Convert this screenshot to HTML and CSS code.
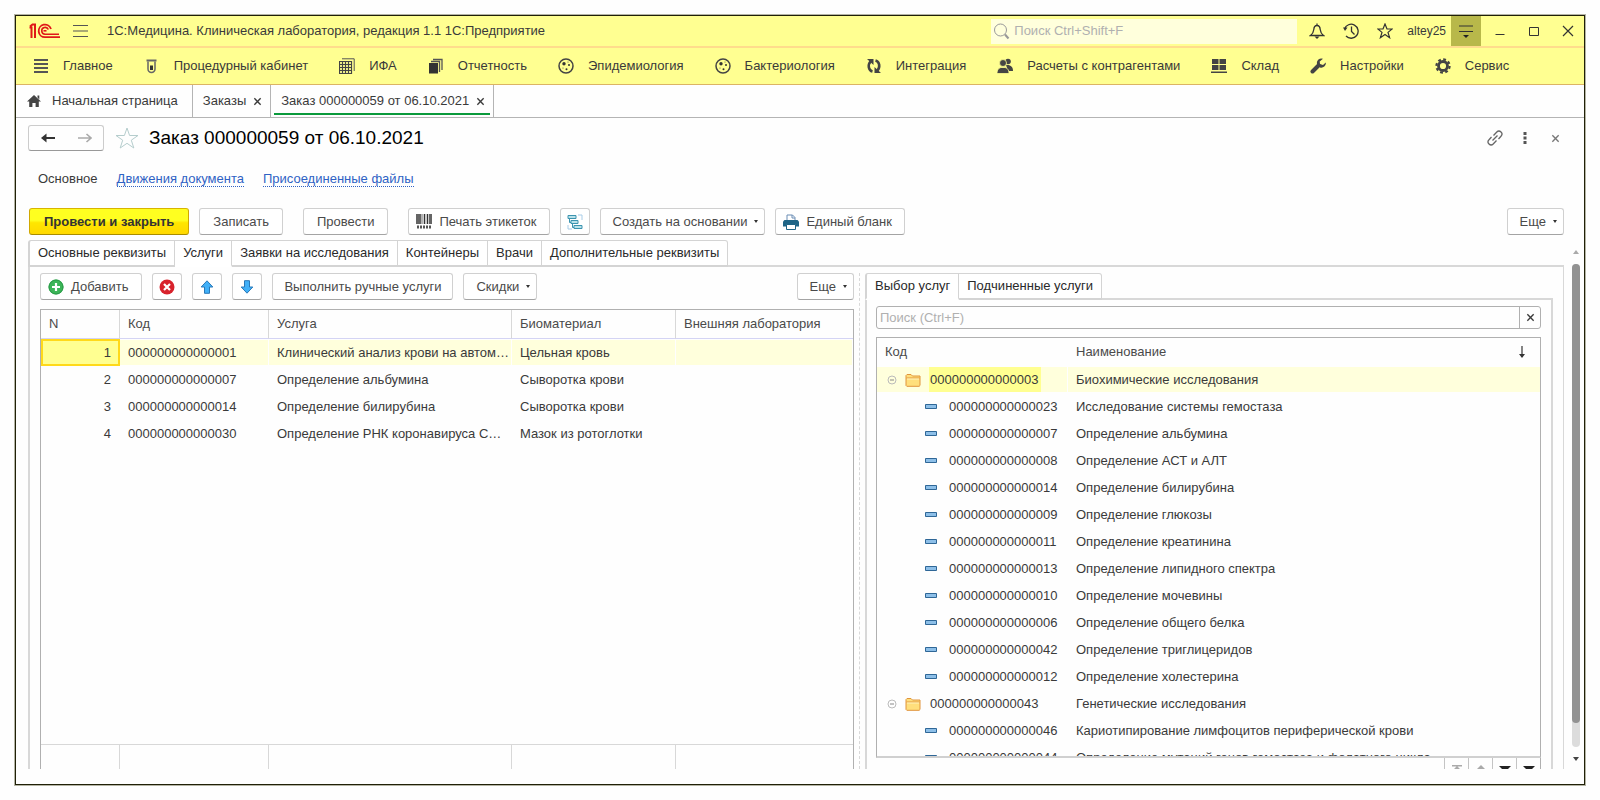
FILE: index.html
```html
<!DOCTYPE html>
<html lang="ru">
<head>
<meta charset="utf-8">
<title>Заказ 000000059 от 06.10.2021</title>
<link rel="stylesheet" href="styles.css">
</head>
<body>
<svg class="defs" width="0" height="0" aria-hidden="true">
  <symbol id="i-folder" viewBox="0 0 16 14"><path d="M1 12.500V2.500l1-1h4l1.500 1.500H15v9.500l-.8.8H1.800z" fill="#ffdf7c" stroke="#e0943c"/><path d="M1.500 5h13" stroke="#e0943c"/><path d="M2 6h12" stroke="#fff3bd"/></symbol>
  <symbol id="i-item" viewBox="0 0 12 5"><path d="M.5.5h11v4H.5z" fill="#8dbfe8" stroke="#2f6797"/></symbol>
  <symbol id="i-minus" viewBox="0 0 10 10"><circle cx="5" cy="5" r="4" fill="none" stroke="#bbb"/><path d="M3 5h4" stroke="#888"/></symbol>
  <symbol id="i-x" viewBox="0 0 10 10"><path d="M1.500 1.500l7 7M8.500 1.500l-7 7" fill="none" stroke="currentColor" stroke-width="1.500"/></symbol>
  <symbol id="i-dish" viewBox="0 0 16 16"><circle cx="8" cy="8" r="7" fill="none" stroke="#444" stroke-width="1.500"/><circle cx="6" cy="5.800" r="1.700" fill="#333"/><circle cx="11" cy="7" r="1" fill="#333"/><circle cx="8.500" cy="11.200" r="1" fill="#333"/><circle cx="10" cy="4" r=".6" fill="#555"/><circle cx="5" cy="10" r=".6" fill="#555"/></symbol>
</svg>
<div class="window">
  <header class="titlebar">
    <svg class="logo" width="32" height="16" viewBox="0 0 32 16" fill="none" stroke="#e01818"><path d="M.5 4.500H2.500V15M6 15V1.500H3.500L1 3.500" stroke-width="2"/><path d="M22 6A6.300 6.300 0 1 0 16 14.200H31" stroke-width="1.800"/><path d="M19.300 6.500A3.400 3.400 0 1 0 16 11.200H30" stroke-width="1.600"/><path d="M14.500 7.800h3" stroke-width="1.600"/></svg>
    <button class="icon-btn burger" aria-label="Меню"><svg width="16" height="14" viewBox="0 0 16 14"><path d="M0 1.500h15M0 7h15M0 12.500h15" stroke="#555" stroke-width="1.200"/></svg></button>
    <div class="app-name">1С:Медицина. Клиническая лаборатория, редакция 1.1 1С:Предприятие</div>
    <label class="global-search">
      <svg width="17" height="17" viewBox="0 0 17 17" fill="none" stroke="#999"><circle cx="7.500" cy="7" r="6"/><path d="M12 11.500l3.500 4" stroke-width="2"/></svg>
      <input type="text" placeholder="Поиск Ctrl+Shift+F" aria-label="Поиск">
    </label>
    <div class="sys-icons">
      <button class="icon-btn" aria-label="Уведомления"><svg width="16" height="16" viewBox="0 0 16 16" fill="none" stroke="#333" stroke-width="1.300"><path d="M1.500 12.500c2-1.500 3-3 3.300-6C5 3.500 6 2.500 8 2.500s3 1 3.200 4c.3 3 1.300 4.500 3.300 6zM8 2.500V.5"/><path d="M5.500 13.500h5L8 16z" fill="#333" stroke="none"/></svg></button>
      <button class="icon-btn" aria-label="История"><svg width="16" height="16" viewBox="0 0 16 16" fill="none" stroke="#333" stroke-width="1.300"><path d="M1.500 6A7 7 0 1 1 3 13M8.500 3.500v5l3 3"/><path d="M0 4.500h4.500L2 8z" fill="#333" stroke="none"/></svg></button>
      <button class="icon-btn" aria-label="Избранное"><svg width="16" height="16" viewBox="0 0 16 16" fill="none" stroke="#333" stroke-width="1.200"><path d="M8 1l2 5h5.200l-4.200 3.400 1.600 5.300L8 11.500l-4.600 3.200L5 9.400.8 6H6z"/></svg></button>
      <span class="user">altey25</span>
    </div>
    <button class="panel-toggle" aria-label="Настройка панели"><svg width="16" height="16" viewBox="0 0 16 16"><path d="M1 3h14M1 8.500h14" stroke="#333" stroke-width="1.200"/><path d="M5 12h6l-3 3z" fill="#222"/></svg></button>
    <div class="win-btns">
      <button class="icon-btn" aria-label="Свернуть"><svg width="12" height="12" viewBox="0 0 12 12"><path d="M1.500 9.500h9" stroke="#333"/></svg></button>
      <button class="icon-btn" aria-label="Развернуть"><svg width="12" height="12" viewBox="0 0 12 12"><path d="M1.500 2.500h9v8h-9z" fill="none" stroke="#333"/></svg></button>
      <button class="icon-btn" aria-label="Закрыть"><svg width="12" height="12" viewBox="0 0 12 12"><path d="M1 1l10 10M11 1L1 11" stroke="#333" stroke-width="1.200"/></svg></button>
    </div>
  </header>

  <nav class="sections">
    <a href="#"><svg viewBox="0 0 16 16"><path d="M1 2h14M1 6h14M1 10h14M1 14h14" stroke="#555" stroke-width="2"/></svg>Главное</a>
    <a href="#"><svg viewBox="0 0 16 16"><path d="M2.500 1.500h10v2h-10z" fill="#666"/><path d="M4 3.500V11a3.500 3.500 0 0 0 7 0V3.500" fill="none" stroke="#666" stroke-width="1.500"/><path d="M6 7.500h3v4.500H6z" fill="#333"/></svg>Процедурный кабинет</a>
    <a href="#"><svg viewBox="0 0 16 16"><path d="M3 .8h12.200V13" fill="none" stroke="#555"/><path d="M.5 3.500h12v12H.500zM.5 6.500h12M.5 9.500h12M.5 12.500h12M3.500 3.500v12M6.500 3.500v12M9.500 3.500v12" fill="none" stroke="#444" stroke-width="1.200"/></svg>ИФА</a>
    <a href="#"><svg viewBox="0 0 16 16"><path d="M1 5h9v10.500H1z" fill="#333"/><path d="M3 3.500h8.500V14M5 1.500h9V12" fill="none" stroke="#555" stroke-width="1.300"/></svg>Отчетность</a>
    <a href="#"><svg><use href="#i-dish"/></svg>Эпидемиология</a>
    <a href="#"><svg><use href="#i-dish"/></svg>Бактериология</a>
    <a href="#"><svg viewBox="0 0 16 16" fill="none" stroke="#444" stroke-width="2.600"><path d="M6.500 13.500C2.500 12.500 1.500 7 4.500 3.500M9.500 2.500c4 1 5 6.500 2 10"/><path d="M1 1h6.500v6zM15 15H8.500V9z" fill="#444" stroke="none"/></svg>Интеграция</a>
    <a href="#"><svg viewBox="0 0 16 16" fill="#444"><circle cx="11" cy="3.500" r="2.800"/><path d="M9 7c5-.5 7 2 7 6h-5z"/><g stroke="#ffff91" stroke-width=".8"><circle cx="6" cy="5" r="3.500"/><path d="M0 15.500c0-4 2-5.500 4-6h4c2 .5 4 2 4 6z"/></g></svg>Расчеты с контрагентами</a>
    <a href="#"><svg viewBox="0 0 16 16" fill="#444"><path d="M1 1h6.500v5H1zM8.500 1H15v5H8.500zM1 7h6.500v5H1zM8.500 7H15v5H8.500zM0 13.500h16V15H0z"/></svg>Склад</a>
    <a href="#"><svg viewBox="0 0 16 16"><path d="M2.500 13.500l6-6" stroke="#444" stroke-width="4" stroke-linecap="round"/><path d="M13 .8A4.500 4.500 0 0 0 7 6l3 3.500a4.500 4.500 0 0 0 5.800-5L13 7l-3-1-.3-2.500z" fill="#444"/></svg>Настройки</a>
    <a href="#"><svg viewBox="0 0 16 16" fill="none" stroke="#444"><circle cx="8" cy="8" r="4.500" stroke-width="2.800"/><circle cx="8" cy="8" r="6.600" stroke-width="2.200" stroke-dasharray="2.800 2.383"/></svg>Сервис</a>
  </nav>

  <div class="open-tabs">
    <a class="otab home" href="#"><svg width="14" height="14" viewBox="0 0 14 14" fill="#444"><path d="M7 1l7 6.500h-2.200V13H8.600V9H5.400v4H2.200V7.500H0zM10.500 1.500h1.800v4l-1.800-2z"/></svg>Начальная страница</a>
    <div class="otab"><a href="#">Заказы</a><button class="icon-btn" aria-label="Закрыть вкладку"><svg width="9" height="9"><use href="#i-x"/></svg></button></div>
    <div class="otab current"><a href="#">Заказ 000000059 от 06.10.2021</a><button class="icon-btn" aria-label="Закрыть вкладку"><svg width="9" height="9"><use href="#i-x"/></svg></button></div>
  </div>

  <main class="form">
    <div class="form-head">
      <div class="history-btns">
        <button class="icon-btn" aria-label="Назад"><svg width="14" height="10" viewBox="0 0 14 10"><path d="M2 5h12" stroke="#333" stroke-width="2"/><path d="M0 5l5.500-4.500v9z" fill="#333"/></svg></button>
        <button class="icon-btn" aria-label="Вперед"><svg width="14" height="10" viewBox="0 0 14 10" fill="none" stroke="#aaa" stroke-width="1.600"><path d="M0 5h13M8.500 1L13 5 8.500 9"/></svg></button>
      </div>
      <button class="icon-btn fav" aria-label="В избранное"><svg width="24" height="22" viewBox="0 0 24 22" fill="none" stroke="#b5cdcd"><path d="M12 1l2.600 7.500H23l-6.700 4.700 2.500 7.800-6.800-4.700L5.200 21l2.500-7.800L1 8.500h8.400z"/></svg></button>
      <h1>Заказ 000000059 от 06.10.2021</h1>
      <div class="head-right">
        <button class="icon-btn" aria-label="Ссылка"><svg width="16" height="16" viewBox="0 0 16 16" fill="none" stroke="#666" stroke-width="1.300"><path d="M6.500 5.500L9.800 2a2.900 2.900 0 0 1 4.200 4.200L11.500 9M9.500 10.500L6.200 14A2.900 2.900 0 0 1 2 9.800L4.500 7M5.500 10.500l5-5"/></svg></button>
        <button class="icon-btn" aria-label="Еще"><svg width="4" height="12" viewBox="0 0 4 12" fill="#555"><path d="M.5 0h3v3h-3zM.5 4.500h3v3h-3zM.5 9h3v3h-3z"/></svg></button>
        <button class="icon-btn dim" aria-label="Закрыть"><svg width="9" height="9"><use href="#i-x"/></svg></button>
      </div>
    </div>

    <div class="form-links"><span>Основное</span><a href="#">Движения документа</a><a href="#">Присоединенные файлы</a></div>

    <div class="commands">
      <button class="btn primary">Провести и закрыть</button>
      <button class="btn">Записать</button>
      <button class="btn apart">Провести</button>
      <button class="btn apart with-icon"><svg width="16" height="15" viewBox="0 0 16 15"><path d="M1 0v10M4 0v10M8.500 0v10M11.500 0v10M15 0v10" stroke="#333" stroke-width="1.500"/><path d="M2.500 0v10M6 0v10M13.500 0v10" stroke="#666"/><path d="M1 13h14" stroke="#555" stroke-width="3" stroke-dasharray="2 1"/></svg>Печать этикеток</button>
      <button class="btn square" aria-label="Структура подчиненности"><svg width="16" height="16" viewBox="0 0 16 16" fill="none" stroke="#3c94b0"><path d="M1 1.500h8v3H1zM4 6.500h7v3H4zM7 11.500h8v3H7zM2.500 4.500v4H4M5.500 9.500v4H7" fill="#b9e2ea"/><path d="M11 1h4v5M5 15H1v-4" stroke="#a8cde8"/></svg></button>
      <button class="btn menu">Создать на основании</button>
      <button class="btn with-icon"><svg width="16" height="16" viewBox="0 0 16 16"><path d="M4 7V1h5.500L12 3.500V7z" fill="#fff" stroke="#6a8db5"/><path d="M9 1v3h3" fill="none" stroke="#6a8db5"/><path d="M1.500 6h13L16 7.500v5H0v-5z" fill="#1f6587"/><path d="M3.500 10.500h9v5h-9z" fill="#fff" stroke="#1f6587"/></svg>Единый бланк</button>
      <button class="btn menu push">Еще</button>
    </div>

    <div class="tabs" role="tablist">
      <button role="tab">Основные реквизиты</button>
      <button role="tab" class="active">Услуги</button>
      <button role="tab">Заявки на исследования</button>
      <button role="tab">Контейнеры</button>
      <button role="tab">Врачи</button>
      <button role="tab">Дополнительные реквизиты</button>
    </div>

    <div class="page">
      <section class="services">
        <div class="commands inner">
          <button class="btn with-icon"><svg width="16" height="16" viewBox="0 0 16 16"><circle cx="8" cy="8" r="7.500" fill="#3cb558"/><circle cx="8" cy="8" r="7" fill="none" stroke="#2a9a48"/><path d="M8 4v8M4 8h8" stroke="#fff" stroke-width="2.200"/></svg>Добавить</button>
          <button class="btn square" aria-label="Удалить"><svg width="16" height="16" viewBox="0 0 16 16"><circle cx="8" cy="8" r="7.500" fill="#d8222c"/><path d="M5 5l6 6M11 5l-6 6" stroke="#fff" stroke-width="2.200"/></svg></button>
          <button class="btn square" aria-label="Вверх"><svg width="14" height="14" viewBox="0 0 14 14"><path d="M7 .8L12.800 7H9.500v6.300h-5V7H1.200z" fill="#40b0f8" stroke="#2878b8"/></svg></button>
          <button class="btn square" aria-label="Вниз"><svg width="14" height="14" viewBox="0 0 14 14"><path d="M7 13.200L12.800 7H9.500V.7h-5V7H1.200z" fill="#40b0f8" stroke="#2878b8"/></svg></button>
          <button class="btn">Выполнить ручные услуги</button>
          <button class="btn menu">Скидки</button>
          <button class="btn menu push">Еще</button>
        </div>
        <table class="grid">
          <colgroup><col class="c-n"><col class="c-code"><col class="c-service"><col class="c-bio"><col></colgroup>
          <thead><tr><th>N</th><th>Код</th><th>Услуга</th><th>Биоматериал</th><th>Внешняя лаборатория</th></tr></thead>
          <tbody>
            <tr class="selected"><td class="num cell-current">1</td><td>000000000000001</td><td>Клинический анализ крови на автом…</td><td>Цельная кровь</td><td></td></tr>
            <tr><td class="num">2</td><td>000000000000007</td><td>Определение альбумина</td><td>Сыворотка крови</td><td></td></tr>
            <tr><td class="num">3</td><td>000000000000014</td><td>Определение билирубина</td><td>Сыворотка крови</td><td></td></tr>
            <tr><td class="num">4</td><td>000000000000030</td><td>Определение РНК коронавируса С…</td><td>Мазок из ротоглотки</td><td></td></tr>
            <tr class="filler"><td colspan="5"></td></tr>
          </tbody>
          <tfoot><tr><td></td><td></td><td></td><td></td><td></td></tr></tfoot>
        </table>
      </section>
      <div class="splitter"></div>
      <section class="picker">
        <div class="tabs" role="tablist">
          <button role="tab" class="active">Выбор услуг</button>
          <button role="tab">Подчиненные услуги</button>
        </div>
        <div class="picker-page">
          <div class="search">
            <input type="text" placeholder="Поиск (Ctrl+F)" aria-label="Поиск услуги">
            <button aria-label="Очистить"><svg width="9" height="9"><use href="#i-x"/></svg></button>
          </div>
          <div class="tree-box">
            <table class="tree">
              <colgroup><col class="c-tree"><col></colgroup>
              <thead><tr><th>Код</th><th><span class="th-in">Наименование<svg width="8" height="12" viewBox="0 0 8 12"><path d="M4 0v11" stroke="#333" stroke-width="1.200"/><path d="M1 8h6l-3 4z" fill="#333"/></svg></span></th></tr></thead>
              <tbody>
                <tr class="group selected"><td><svg class="tg" width="10" height="10"><use href="#i-minus"/></svg><svg class="fold" width="16" height="14"><use href="#i-folder"/></svg><span class="code">000000000000003</span></td><td>Биохимические исследования</td></tr>
                <tr><td><svg class="leaf" width="12" height="5"><use href="#i-item"/></svg>000000000000023</td><td>Исследование системы гемостаза</td></tr>
                <tr><td><svg class="leaf" width="12" height="5"><use href="#i-item"/></svg>000000000000007</td><td>Определение альбумина</td></tr>
                <tr><td><svg class="leaf" width="12" height="5"><use href="#i-item"/></svg>000000000000008</td><td>Определение АСТ и АЛТ</td></tr>
                <tr><td><svg class="leaf" width="12" height="5"><use href="#i-item"/></svg>000000000000014</td><td>Определение билирубина</td></tr>
                <tr><td><svg class="leaf" width="12" height="5"><use href="#i-item"/></svg>000000000000009</td><td>Определение глюкозы</td></tr>
                <tr><td><svg class="leaf" width="12" height="5"><use href="#i-item"/></svg>000000000000011</td><td>Определение креатинина</td></tr>
                <tr><td><svg class="leaf" width="12" height="5"><use href="#i-item"/></svg>000000000000013</td><td>Определение липидного спектра</td></tr>
                <tr><td><svg class="leaf" width="12" height="5"><use href="#i-item"/></svg>000000000000010</td><td>Определение мочевины</td></tr>
                <tr><td><svg class="leaf" width="12" height="5"><use href="#i-item"/></svg>000000000000006</td><td>Определение общего белка</td></tr>
                <tr><td><svg class="leaf" width="12" height="5"><use href="#i-item"/></svg>000000000000042</td><td>Определение триглицеридов</td></tr>
                <tr><td><svg class="leaf" width="12" height="5"><use href="#i-item"/></svg>000000000000012</td><td>Определение холестерина</td></tr>
                <tr class="group"><td><svg class="tg" width="10" height="10"><use href="#i-minus"/></svg><svg class="fold" width="16" height="14"><use href="#i-folder"/></svg><span class="code">000000000000043</span></td><td>Генетические исследования</td></tr>
                <tr><td><svg class="leaf" width="12" height="5"><use href="#i-item"/></svg>000000000000046</td><td>Кариотипирование лимфоцитов периферической крови</td></tr>
                <tr><td><svg class="leaf" width="12" height="5"><use href="#i-item"/></svg>000000000000044</td><td>Определение мутаций генов гемостаза и фолатного цикла</td></tr>
              </tbody>
            </table>
          </div>
          <div class="pager">
            <button aria-label="В начало" disabled><svg width="12" height="10" viewBox="0 0 12 10" fill="#aaa"><path d="M1 0h10v1.500H1zM6 1l5 5H1z"/></svg></button>
            <button aria-label="Вверх" disabled><svg width="12" height="10" viewBox="0 0 12 10" fill="#aaa"><path d="M6 0l5 5H1z"/></svg></button>
            <button aria-label="Вниз"><svg width="12" height="10" viewBox="0 0 12 10" fill="#222"><path d="M0 1h12L6 7z"/></svg></button>
            <button aria-label="В конец"><svg width="12" height="10" viewBox="0 0 12 10" fill="#222"><path d="M0 1h12L6 7zM1 8h10v2H1z"/></svg></button>
          </div>
        </div>
      </section>
    </div>

    <div class="scroll" aria-hidden="true">
      <svg width="6" height="4" viewBox="0 0 6 4"><path d="M3 0l3 4H0z" fill="#aaa"/></svg>
      <div class="track"><div class="thumb"></div></div>
      <svg width="6" height="4" viewBox="0 0 6 4"><path d="M3 4l3-4H0z" fill="#444"/></svg>
    </div>
  </main>
</div>
</body>
</html>
```
FILE: styles.css
```css
* { box-sizing: border-box; }
html, body { height: 100%; }
body {
  margin: 0;
  padding: 15px;
  background: #fefefe;
  color: #3a3a3a;
  font: 13px/16px "Liberation Sans", Arial, sans-serif;
}
button, input { font: inherit; color: inherit; }
a { color: inherit; text-decoration: none; }
svg { display: block; flex: none; }
.defs { position: absolute; }
.icon-btn {
  display: flex;
  align-items: center;
  justify-content: center;
  padding: 0;
  border: 0;
  background: none;
}

.window {
  display: flex;
  flex-direction: column;
  height: 100%;
  border: 1px solid #202008;
  box-shadow: 0 0 0 1px #b4b4a4;
  background: #fefefe;
  overflow: hidden;
}

/* title bar */
.titlebar {
  display: flex;
  align-items: center;
  flex: none;
  height: 32px;
  padding-left: 13px;
  border-bottom: 2px solid #ffdc8c;
  background: #ffff91;
}
.burger { margin-left: 12px; }
.app-name { flex: 1; margin-left: 18px; white-space: nowrap; }
.global-search {
  display: flex;
  align-items: center;
  gap: 4px;
  width: 306px;
  height: 25px;
  padding: 0 2px;
  background: #ffffdc;
}
.global-search input { flex: 1; min-width: 0; padding: 0; border: 0; background: none; outline: 0; }
input::placeholder { color: #b0b0b0; opacity: 1; }
.sys-icons { display: flex; align-items: center; gap: 18px; margin-left: 12px; }
.user { margin-left: -4px; font-size: 12px; }
.panel-toggle {
  display: flex;
  align-items: center;
  justify-content: center;
  align-self: stretch;
  width: 30px;
  margin-left: 5px;
  padding: 0;
  border: 0;
  background: #b8b84a;
}
.win-btns { display: flex; gap: 22px; margin: 0 10px 0 13px; }

/* sections */
.sections {
  display: flex;
  align-items: center;
  gap: 31px;
  flex: none;
  height: 37px;
  padding-left: 17px;
  border-bottom: 1px solid #dcb464;
  background: #ffff91;
}
.sections a { display: flex; align-items: center; gap: 14px; white-space: nowrap; }
.sections svg { width: 16px; height: 16px; }

/* open windows */
.open-tabs { display: flex; flex: none; height: 33px; border-bottom: 1px solid #b4b4b4; }
.otab {
  display: flex;
  align-items: center;
  gap: 7px;
  padding: 0 8px 0 10px;
  border-right: 1px solid #b4b4b4;
  white-space: nowrap;
}
.otab.home { gap: 11px; padding: 0 14px 0 11px; }
.otab.current { background: linear-gradient(#0a9a3c, #0a9a3c) center bottom 2px / calc(100% - 6px) 2px no-repeat; }

/* form */
.form {
  position: relative;
  display: flex;
  flex-direction: column;
  flex: 1;
  min-height: 0;
  padding: 7px 20px 0 12px;
  margin-bottom: 15px;
  overflow: hidden;
}
.form-head { display: flex; align-items: center; flex: none; height: 26px; }
.history-btns {
  display: flex;
  width: 76px;
  height: 26px;
  border: 1px solid #ccc;
  border-bottom-color: #999;
  border-radius: 3px;
}
.history-btns button { flex: 1; }
.fav { margin-left: 11px; }
h1 { margin: 0 0 0 10px; color: #000; font-size: 19px; font-weight: 400; line-height: 24px; }
.head-right { display: flex; align-items: center; gap: 24px; margin: 0 4px 0 auto; }
.head-right button:first-child { margin-right: -4px; }
.dim { color: #777; }

.form-links { display: flex; flex: none; gap: 19px; padding: 20px 0 0 10px; }
.form-links a { color: #2f62c4; border-bottom: 1px dotted #2f62c4; line-height: 15px; }

.commands { display: flex; gap: 10px; flex: none; margin-top: 21px; }
.btn {
  display: flex;
  align-items: center;
  justify-content: center;
  height: 27px;
  padding: 0 13px;
  border: 1px solid #d0d0d0;
  border-bottom-color: #a4a4a4;
  border-radius: 3px;
  background: #fff;
  color: #4a4a4a;
  white-space: nowrap;
}
.form > .commands { padding-left: 1px; }
.btn.primary {
  padding: 0 14px;
  border-color: #d8b400 #d0a800 #a88c00;
  background: linear-gradient(#ffff20 0 45%, #ffe600 55%, #ffd800);
  color: #333;
  font-weight: 700;
}
.btn.apart { margin-left: 10px; }
.btn.with-icon { gap: 7px; padding: 0 12px 0 7px; }
.btn.square { width: 30px; padding: 0; }
.btn.menu { padding: 0 6px 0 12px; }
.btn.menu::after {
  content: "";
  margin-left: 7px;
  border: 2px solid transparent;
  border-top: 3px solid #333;
  border-bottom: 0;
}
.push { margin-left: auto; }

.tabs { display: flex; flex: none; position: relative; z-index: 1; margin-bottom: -2px; }
.tabs button {
  height: 27px;
  padding: 0 8px;
  border: solid #d4d4d4;
  border-width: 1px 1px 2px 0;
  background: #fff;
  color: #2a2a2a;
  white-space: nowrap;
}
.tabs button:first-child { border-left-width: 2px; border-top-left-radius: 3px; }
.tabs button:last-child { border-top-right-radius: 3px; }
.tabs .active { border-bottom-color: #fff; }
.form > .tabs { margin-top: 5px; }

.page {
  display: flex;
  flex: 1;
  min-height: 0;
  padding: 6px 10px 0;
  border: solid #d8d8d8;
  border-width: 2px 1px 0 2px;
}
.services { display: flex; flex-direction: column; flex: 814 1 0; min-width: 0; }
.inner { margin-top: 0; }
.inner .btn { padding: 0 11px; }
.inner .btn.with-icon { padding: 0 13px 0 7px; }
.inner .btn.square { padding: 0; }
.inner .btn.menu { padding: 0 6px 0 12px; }
.picker { display: flex; flex-direction: column; flex: 688 1 0; min-width: 0; }
.splitter { flex: none; width: 1px; margin: 0 5px; border-left: 1px dashed #d8d8d8; }

table { width: 100%; table-layout: fixed; border-collapse: separate; border-spacing: 0; }
th { font-weight: 400; text-align: left; color: #4a4a4a; }
th, td { padding: 0 0 0 8px; white-space: nowrap; }
.grid { flex: 1; margin-top: 9px; border: solid #b0b0b0; border-width: 1px 1px 0; }
.c-n { width: 79px; }
.c-code { width: 149px; }
.c-service { width: 243px; }
.c-bio { width: 164px; }
.grid th { height: 29px; border-right: 1px solid #d8d8d8; border-bottom: 1px solid #d4d4f4; }
.grid th:last-child { border-right: 0; }
.grid tbody td { height: 27px; border: solid #fefefe; border-width: 1px 1px 1px 0; }
.grid .num { padding-right: 8px; text-align: right; }
.selected td { background: #ffffdc; }
.grid .cell-current { border: 2px solid #ffd91a; padding-right: 7px; background: #ffff91; }
.grid .filler td { height: auto; }
.grid tfoot td { height: 25px; border-top: 1px solid #d8d8d8; border-right: 1px solid #d8d8d8; }
.grid tfoot td:last-child { border-right: 0; }

.picker-page {
  display: flex;
  flex-direction: column;
  flex: 1;
  min-height: 0;
  padding: 6px 10px 0 9px;
  border: solid #d8d8d8;
  border-width: 2px 2px 0;
}
.search { display: flex; flex: none; height: 23px; border: 1px solid #b0b0b0; border-radius: 3px; }
.search input { flex: 1; min-width: 0; padding: 0 3px; border: 0; background: none; outline: 0; }
.search button {
  display: flex;
  align-items: center;
  justify-content: center;
  width: 21px;
  padding: 0;
  border: 0;
  border-left: 1px solid #b0b0b0;
  background: none;
}
.tree-box {
  flex: 1;
  min-height: 0;
  margin-top: 8px;
  border: 1px solid #b0b0b0;
  border-bottom: 2px solid #d0d0d0;
  overflow: hidden;
}
.c-tree { width: 191px; }
.tree th { height: 29px; padding-bottom: 2px; }
.tree td { height: 27px; border-bottom: 2px solid #fefefe; }
.tree td:first-child { border-right: 1px solid #fefefe; }
.tree td svg { display: inline-block; vertical-align: middle; }
.tg { margin-left: 2px; }
.fold { margin: 0 8px; }
.leaf { margin: 0 12px 2px 40px; }
.code { display: inline-block; padding: 0 3px 0 1px; line-height: 25px; vertical-align: middle; }
.selected .code { background: #ffff91; }
.th-in { display: flex; align-items: center; justify-content: space-between; padding-right: 14px; }
.pager { display: flex; justify-content: flex-end; flex: none; height: 11px; border-right: 1px solid #b0b0b0; overflow: hidden; }
.pager button {
  display: flex;
  align-items: flex-start;
  justify-content: center;
  width: 24px;
  height: 22px;
  padding: 7px 0 0;
  border: 0;
  border-left: 1px solid #c4c4c4;
  background: none;
}

.scroll {
  position: absolute;
  top: 132px;
  right: 4px;
  bottom: 8px;
  display: flex;
  flex-direction: column;
  align-items: center;
  gap: 10px;
  width: 8px;
}
.track { flex: 1; width: 8px; border-radius: 4px; background: #dcdcdc; }
.thumb { height: 95%; border-radius: 4px; background: #929292; }
```
